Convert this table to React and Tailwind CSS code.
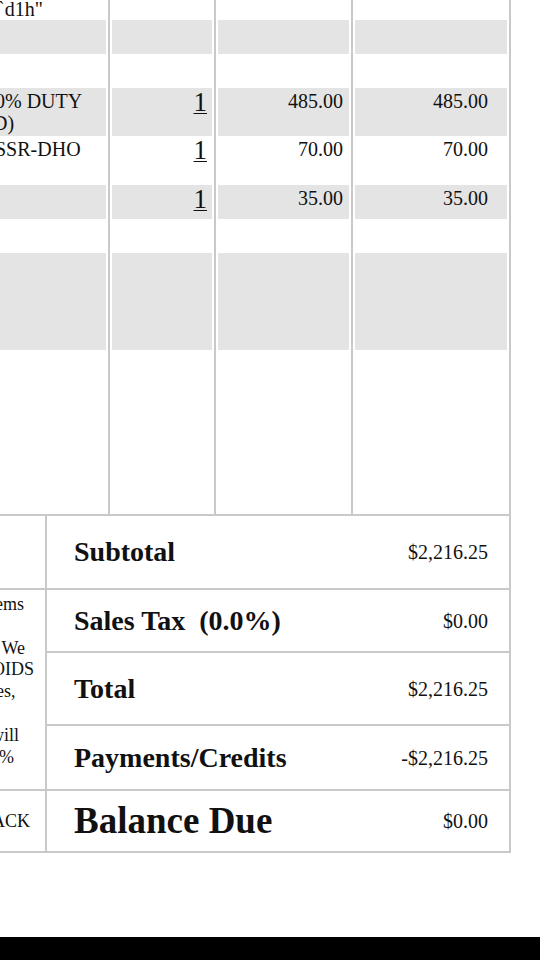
import React from "react";

const serif = { fontFamily: '"Liberation Serif", "Times New Roman", serif' };

const lineItems = [
  { h: "h-[20px]", gray: false, desc: [{ text: '`d1h"', cls: "-ml-[2px] -mt-[4px]" }] },
  { h: "h-[34px]", gray: true },
  { h: "h-[34px]", gray: false },
  {
    h: "h-[48px]",
    gray: true,
    desc: [
      { text: "0% DUTY", cls: "-ml-[5px]" },
      { text: "D)", cls: "-ml-[7px]" },
    ],
    qty: "1",
    rate: "485.00",
    amount: "485.00",
  },
  { h: "h-[49px]", gray: false, desc: [{ text: "SSR-DHO", cls: "-ml-[5px]" }], qty: "1", rate: "70.00", amount: "70.00" },
  { h: "h-[34px]", gray: true, qty: "1", rate: "35.00", amount: "35.00" },
  { h: "h-[34px]", gray: false },
  { h: "h-[97px]", gray: true },
  { h: "h-[164px]", gray: false },
];

const totals = [
  { label: "Subtotal", value: "$2,216.25" },
  { label: "Sales Tax\u00a0\u00a0(0.0%)", value: "$0.00" },
  { label: "Total", value: "$2,216.25" },
  { label: "Payments/Credits", value: "-$2,216.25" },
  { label: "Balance Due", value: "$0.00", big: true },
];

const notes = [
  { text: "ems", cls: "-ml-[5px]" },
  { text: "\u00a0" },
  { text: "\u00a0We", cls: "-ml-[3px]" },
  { text: "OIDS", cls: "-ml-[8px]" },
  { text: "es,", cls: "-ml-[4px]" },
  { text: "\u00a0" },
  { text: "will", cls: "-ml-[9px]" },
  { text: "%", cls: "-ml-[1px]" },
];

const Cell = ({ width, gray, inset, children, className = "" }) => (
  <div className={`${width} h-full border-r-2 border-[#c9c9c9] ${inset}`}>
    <div className={`h-full ${gray ? "bg-[#e4e4e4]" : ""} ${className}`}>{children}</div>
  </div>
);

const App = () => {
  return (
    <div className="w-[540px] h-[960px] bg-white text-[#111] flex flex-col overflow-hidden" style={serif}>
      <div className="w-[511px]">
        {lineItems.map((row, idx) => (
          <div key={idx} className={`flex ${row.h}`}>
            <Cell width="w-[110px]" gray={row.gray} inset="pr-[2px]" className="pt-[2px] text-[20px] leading-[22px] overflow-hidden">
              {row.desc?.map((d, i) => (
                <div key={i} className={`whitespace-nowrap ${d.cls}`}>{d.text}</div>
              ))}
            </Cell>
            <Cell width="w-[106px]" gray={row.gray} inset="px-[2px]" className="flex justify-end pr-[5px] pt-[1px]">
              {row.qty && (
                <span className="text-[27px] leading-[27px] underline decoration-1 underline-offset-[2px]">{row.qty}</span>
              )}
            </Cell>
            <Cell width="w-[137px]" gray={row.gray} inset="px-[2px]" className="text-right pr-[6px] pt-[2px] text-[20px] leading-[22px]">
              {row.rate}
            </Cell>
            <Cell width="w-[158px]" gray={row.gray} inset="px-[2px]" className="text-right pr-[19px] pt-[2px] text-[20px] leading-[22px]">
              {row.amount}
            </Cell>
          </div>
        ))}
      </div>

      <div className="w-[511px] grid grid-cols-[47px_464px] grid-rows-[74px_63px_73px_65px_62px] border-t-2 border-[#c9c9c9]">
        <div className="row-start-1 col-start-1 border-r-2 border-b-2 border-[#c9c9c9]" />
        <div className="row-start-2 row-span-3 col-start-1 border-r-2 border-b-2 border-[#c9c9c9] pt-[4px] text-[18px] leading-[21.8px] overflow-hidden">
          {notes.map((n, i) => (
            <div key={i} className={`whitespace-nowrap ${n.cls || ""}`}>{n.text}</div>
          ))}
        </div>
        <div className="row-start-5 col-start-1 border-r-2 border-b-2 border-[#c9c9c9] flex items-center text-[18px] overflow-hidden">
          <span className="whitespace-nowrap -ml-[8px]">ACK</span>
        </div>
        {totals.map((t, i) => (
          <div
            key={t.label}
            className="col-start-2 border-r-2 border-b-2 border-[#c9c9c9] flex items-center justify-between pl-[27px] pr-[21px]"
            style={{ gridRowStart: i + 1 }}
          >
            <span className={`font-bold whitespace-nowrap ${t.big ? "text-[37px]" : "text-[28px]"}`}>{t.label}</span>
            <span className="text-[20px]">{t.value}</span>
          </div>
        ))}
      </div>

      <div className="mt-auto h-[23px] bg-black" />
    </div>
  );
};

export default App;
